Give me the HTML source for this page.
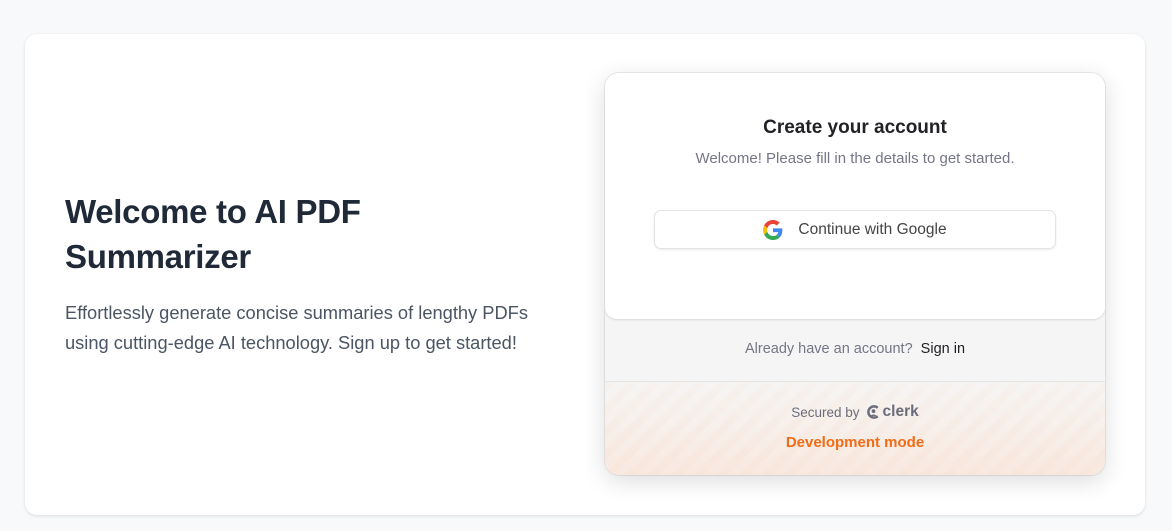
<!DOCTYPE html>
<html><head><meta charset="utf-8"><style>
*{box-sizing:border-box;margin:0;padding:0}
body{width:1172px;height:531px;background:#f8f9fb;font-family:"Liberation Sans",sans-serif;position:relative;overflow:hidden}
.outer{position:absolute;left:25px;top:34px;width:1120px;height:481px;background:#fff;border-radius:12px;box-shadow:0 1px 3px rgba(0,0,0,.12)}
h1{position:absolute;left:65px;top:189px;font-size:33px;line-height:45px;color:#1f2937;font-weight:bold;letter-spacing:-0.3px}
p.lead{position:absolute;left:65px;top:298px;font-size:18.3px;line-height:30px;color:#4b5563}
.card{position:absolute;left:605px;top:73px;width:500px;height:402px;border-radius:14px;background:#f5f5f5;box-shadow:0 6px 24px rgba(0,0,0,.14),0 0 0 1px rgba(0,0,0,.07);overflow:hidden}
.top{position:absolute;left:0;top:0;width:500px;height:246px;background:#fff;border-radius:0 0 12px 12px;box-shadow:0 1px 2px rgba(0,0,0,.12)}
.t1{position:absolute;top:44px;width:100%;text-align:center;font-size:19px;font-weight:bold;color:#212126}
.t2{position:absolute;top:77px;width:100%;text-align:center;font-size:15px;color:#747686}
.btn{position:absolute;left:49px;top:137px;width:402px;height:39px;border-radius:7px;border:1px solid #e3e3e6;box-shadow:0 1px 2px rgba(0,0,0,.08);display:flex;align-items:center;justify-content:center;font-size:15.5px;color:#444}
.btn svg{margin-right:15px}
.mid{position:absolute;top:268px;width:100%;text-align:center;font-size:14.5px;color:#747686}
.mid b{color:#212126;font-weight:normal;margin-left:4px}
.dev{position:absolute;top:308px;left:0;width:500px;height:94px;border-top:1px solid #e4e4e4;background:repeating-linear-gradient(135deg,rgba(243,107,22,.025) 0 8px,rgba(243,107,22,0) 8px 16px),linear-gradient(#f6f5f4,#f8e9e0)}
.sec{position:absolute;top:21px;width:100%;text-align:center;font-size:13.5px;color:#6b6d7a;display:flex;justify-content:center;align-items:center}
.clerk{font-weight:bold;font-size:15.5px;color:#6b6d7a;margin-left:6px;display:flex;align-items:center}
.devm{position:absolute;top:52px;width:100%;text-align:center;font-size:15px;font-weight:bold;color:#f36b16}
</style></head><body>
<div class="outer"></div>
<h1>Welcome to AI PDF<br>Summarizer</h1>
<p class="lead">Effortlessly generate concise summaries of lengthy PDFs<br>using cutting-edge AI technology. Sign up to get started!</p>
<div class="card">
 <div class="top">
  <div class="t1">Create your account</div>
  <div class="t2">Welcome! Please fill in the details to get started.</div>
  <div class="btn"><svg width="20" height="20" viewBox="0 0 48 48"><path fill="#EA4335" d="M24 9.5c3.5 0 6.6 1.2 9.1 3.6l6.8-6.8C35.8 2.4 30.3 0 24 0 14.6 0 6.6 5.4 2.7 13.3l7.9 6.1C12.5 13.6 17.8 9.5 24 9.5z"/><path fill="#4285F4" d="M46.5 24.5c0-1.6-.1-3.1-.4-4.5H24v9h12.7c-.6 2.9-2.2 5.4-4.7 7.1l7.7 6c4.5-4.2 6.8-10.4 6.8-17.6z"/><path fill="#FBBC05" d="M10.5 28.6c-.5-1.4-.8-3-.8-4.6s.3-3.2.8-4.6l-7.9-6.1C1 16.5 0 20.1 0 24s.9 7.5 2.7 10.7l7.8-6.1z"/><path fill="#34A853" d="M24 48c6.5 0 11.9-2.1 15.9-5.8l-7.7-6c-2.200 1.5-5 2.3-8.2 2.3-6.2 0-11.5-4.2-13.4-9.9l-7.9 6.1C6.6 42.6 14.6 48 24 48z"/></svg>Continue with Google</div>
 </div>
 <div class="mid">Already have an account? <b>Sign in</b></div>
 <div class="dev">
  <div class="sec">Secured by <span class="clerk"><svg width="15" height="16" viewBox="0 0 16 16" style="margin-right:2px"><path d="M12.5 3.5A6 6 0 1 0 12.5 12.5" fill="none" stroke="#6b6d7a" stroke-width="2.6"/><circle cx="8" cy="7" r="2" fill="#6b6d7a"/><path d="M4.8 12.2a4 4 0 0 1 6.4 0" fill="#6b6d7a"/></svg>clerk</span></div>
  <div class="devm">Development mode</div>
 </div>
</div>
</body></html>
